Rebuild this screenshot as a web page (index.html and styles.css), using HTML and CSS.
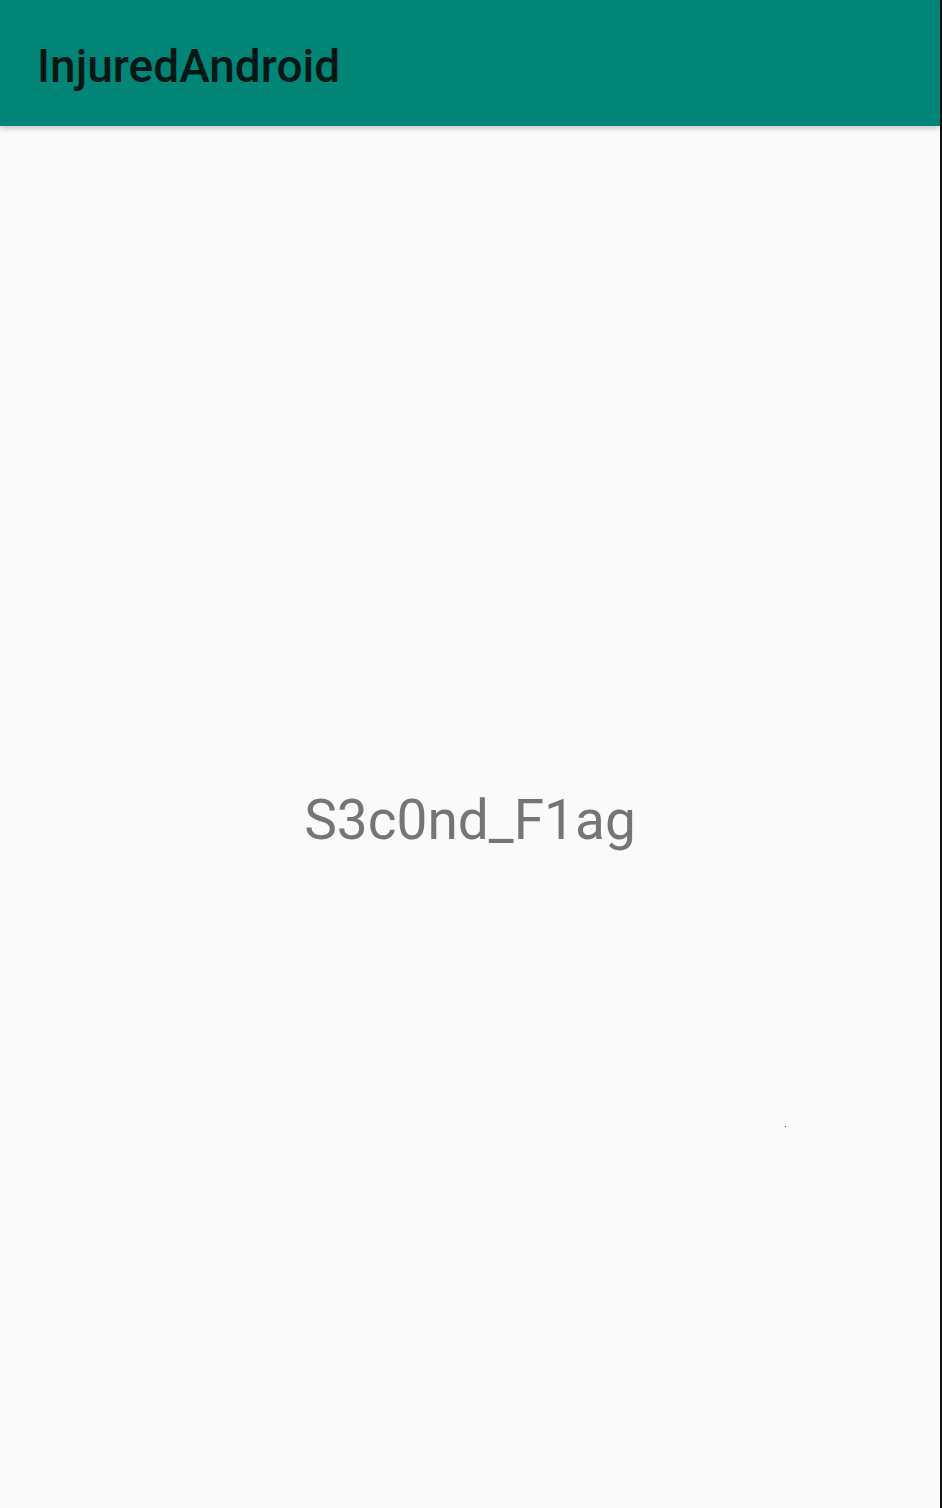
FILE: index.html
```html
<!DOCTYPE html>
<html>
<head>
<meta charset="utf-8">
<link rel="stylesheet" href="styles.css">
</head>
<body>
<div class="screen">
  <div class="app">
    <header class="toolbar">
      <h1 class="title">InjuredAndroid</h1>
    </header>
    <main class="content">
      <p class="flag">S3c0nd_F1ag</p>
      <span class="dot"></span>
    </main>
  </div>
  <div class="edge"></div>
</div>
</body>
</html>
```
FILE: styles.css
```css
html, body {
  margin: 0;
  padding: 0;
  height: 100%;
}
body {
  background: #fafafa;
  font-family: Roboto, "Liberation Sans", sans-serif;
}
.screen {
  display: flex;
  width: 942px;
  height: 1508px;
}
.app {
  flex: 1;
  display: flex;
  flex-direction: column;
  position: relative;
}
.edge {
  width: 2px;
  background: #111;
}
.toolbar {
  height: 126px;
  box-sizing: border-box;
  padding-top: 5px;
  flex: none;
  background: #008577;
  display: flex;
  align-items: center;
  padding-left: 37px;
  box-shadow: 0 2px 6px rgba(0,0,0,0.22);
  position: relative;
  z-index: 1;
}
.title {
  margin: 0;
  font-size: 46px;
  font-weight: 500;
  line-height: 1;
  color: #051714;
}
.content {
  flex: 1;
  display: flex;
  align-items: center;
  justify-content: center;
  position: relative;
  padding-top: 6px;
}
.flag {
  margin: 0;
  font-size: 55px;
  line-height: 1;
  color: #757575;
}
.dot {
  position: absolute;
  left: 785px;
  top: 1000px;
  width: 1px;
  height: 1px;
  background: #e00000;
}
```
